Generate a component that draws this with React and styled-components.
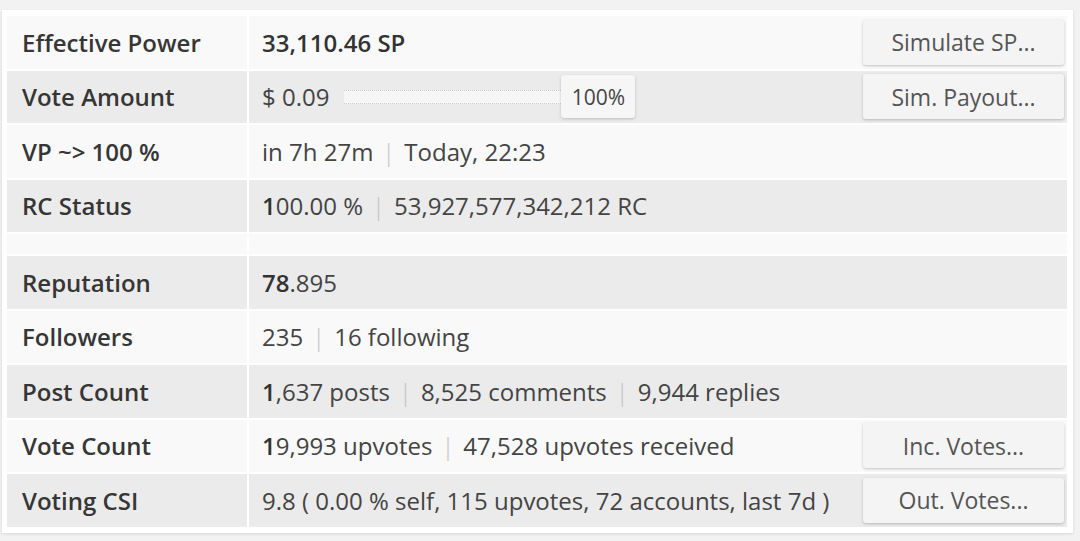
import React from "react"
import styled, { createGlobalStyle } from "styled-components"

const GlobalStyle = createGlobalStyle`
  html, body {
    margin: 0;
    padding: 0;
    background: #f2f2f2;
    font-family: "Open Sans", "DejaVu Sans", sans-serif;
  }
`

const Card = styled.div`
  margin: 10px 7px 8px 2px;
  padding: 6px 6px 6px 5px;
  background: #ffffff;
  box-shadow: 0 1px 3px rgba(0, 0, 0, 0.12);
`

const Rows = styled.div`
  display: flex;
  flex-direction: column;
  gap: 2px;
`

const Row = styled.div`
  display: grid;
  grid-template-columns: 240px 1fr;
  column-gap: 2px;
  height: ${props => (props.$spacer ? "20px" : "52.5px")};
`

const Cell = styled.div`
  display: flex;
  align-items: center;
  background: ${props => (props.$shade ? "#ebebeb" : "#f9f9f9")};
  color: #3a3a3a;
  font-size: 24px;
  white-space: nowrap;
`

const Label = styled(Cell)`
  padding-left: 15px;
  font-weight: 600;
  color: #363636;
`

const Value = styled(Cell)`
  padding-left: 13px;
  padding-right: 3px;
  color: #444;
`

const Strong = styled.span`
  font-weight: 600;
  color: #333;
`

const Sep = styled.span`
  color: #c2c2c2;
  margin: 0 9px;
  font-weight: 300;
`

const Button = styled.div`
  margin-left: auto;
  width: 201px;
  height: 45px;
  display: flex;
  align-items: center;
  justify-content: center;
  background: #f4f4f4;
  border-radius: 3px;
  box-shadow: 0 1px 3px rgba(0, 0, 0, 0.22);
  color: #555;
  font-size: 23px;
`

const Slider = styled.div`
  display: flex;
  align-items: center;
  margin-left: 15px;
`

const Track = styled.div`
  width: 217px;
  height: 12px;
  background: #f6f6f6;
  border-top: 1px dotted #cdcdcd;
  border-bottom: 1px dotted #cdcdcd;
`

const Handle = styled.div`
  width: 74px;
  height: 43px;
  display: flex;
  align-items: center;
  justify-content: center;
  background: #f6f6f6;
  border-radius: 3px;
  box-shadow: 0 1px 3px rgba(0, 0, 0, 0.2);
  color: #444;
  font-size: 21px;
`

const Bar = () => <Sep>|</Sep>

const groups = [
  [
    {
      label: "Effective Power",
      value: <Strong>33,110.46 SP</Strong>,
      button: "Simulate SP...",
    },
    {
      label: "Vote Amount",
      value: (
        <>
          $ 0.09
          <Slider>
            <Track />
            <Handle>100%</Handle>
          </Slider>
        </>
      ),
      button: "Sim. Payout...",
    },
    {
      label: "VP ~> 100 %",
      value: <>in 7h 27m<Bar />Today, 22:23</>,
    },
    {
      label: "RC Status",
      value: <><Strong>1</Strong>00.00 %<Bar />53,927,577,342,212 RC</>,
    },
  ],
  [
    {
      label: "Reputation",
      value: <><Strong>78</Strong>.895</>,
    },
    {
      label: "Followers",
      value: <>235<Bar />16 following</>,
    },
    {
      label: "Post Count",
      value: <><Strong>1</Strong>,637 posts<Bar />8,525 comments<Bar />9,944 replies</>,
    },
    {
      label: "Vote Count",
      value: <><Strong>1</Strong>9,993 upvotes<Bar />47,528 upvotes received</>,
      button: "Inc. Votes...",
    },
    {
      label: "Voting CSI",
      value: "9.8 ( 0.00 % self, 115 upvotes, 72 accounts, last 7d )",
      button: "Out. Votes...",
    },
  ],
]

const App = () => (
  <>
    <GlobalStyle />
    <Card>
      <Rows>
        {groups.map((group, g) => (
          <React.Fragment key={g}>
            {g > 0 && (
              <Row $spacer>
                <Cell />
                <Cell />
              </Row>
            )}
            {group.map((r, i) => {
              const shade = g === 0 ? i % 2 === 1 : i % 2 === 0
              return (
                <Row key={r.label}>
                  <Label $shade={shade}>{r.label}</Label>
                  <Value $shade={shade}>
                    {r.value}
                    {r.button && <Button>{r.button}</Button>}
                  </Value>
                </Row>
              )
            })}
          </React.Fragment>
        ))}
      </Rows>
    </Card>
  </>
)

export default App
